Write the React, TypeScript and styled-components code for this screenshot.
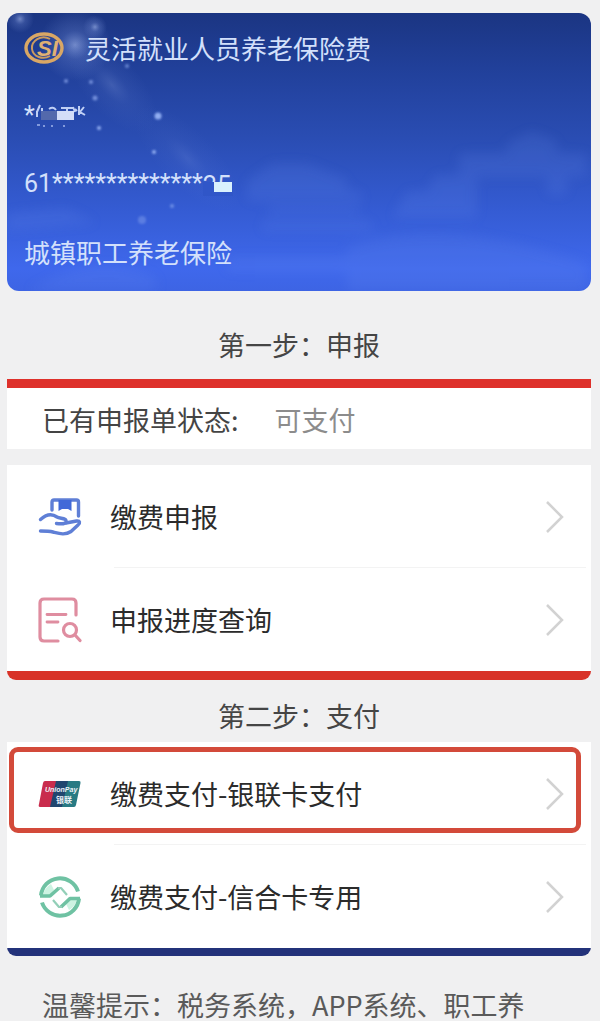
import React from "react";
import styled, { createGlobalStyle } from "styled-components";

const GlobalStyle = createGlobalStyle`
  * { box-sizing: border-box; }
  html, body { margin: 0; padding: 0; background: #f0f0f1; }
  body {
    font-family: "Noto Sans CJK SC", "Noto Sans", sans-serif;
    font-size: 27px;
    line-height: 40px;
    color: #333;
    overflow-x: hidden;
  }
`;

const Page = styled.main`
  padding: 13px 9px 0 7px;
`;

const Card = styled.section`
  position: relative;
  overflow: hidden;
  border-radius: 12px;
  padding: 15px 17px 19px;
  background: linear-gradient(180deg, #1b3582 0%, #21409a 20%, #2a4db3 45%, #345bd2 70%, #3f68ec 92%, #3d64e4 100%);
  color: #d3e0fb;
  font-size: 26px;
`;

const CardArt = styled.svg`
  position: absolute;
  inset: 0;
  width: 100%;
  height: 100%;
`;

const CardBody = styled.div`
  position: relative;
  display: flex;
  flex-direction: column;
  gap: 28px;
`;

const CardHead = styled.div`
  display: flex;
  align-items: center;
  gap: 15px;
  height: 40px;
`;

const CardTitle = styled.h1`
  margin: 0;
  font-size: 26px;
  font-weight: 400;
  line-height: 40px;
`;

const CardLine = styled.p`
  margin: 0;
  display: flex;
  align-items: center;
  height: 40px;
`;

const Latin = styled.span`
  font-family: Roboto, "Noto Sans CJK SC", sans-serif;
  font-size: 25px;
`;

const Masked = styled.span`
  position: relative;
`;

const MaskArt = styled.svg<{ $rise: number }>`
  position: absolute;
  left: 0;
  top: 50%;
  margin-top: -${(p) => p.$rise}px;
`;

const StepTitle = styled.h2<{ $tall?: boolean }>`
  margin: 0;
  display: flex;
  align-items: center;
  justify-content: center;
  height: ${(p) => (p.$tall ? 88 : 62)}px;
  padding-top: ${(p) => (p.$tall ? 20 : 10)}px;
  font-size: 27px;
  font-weight: 400;
  color: #454545;
`;

const Status = styled.div`
  display: flex;
  align-items: center;
  gap: 36px;
  height: 70px;
  margin-bottom: 16px;
  padding: 2px 35px 0;
  border-top: 9px solid #de312b;
  background: #fff;
  color: #444;
`;

const StatusValue = styled.span`
  color: #8c8c8c;
`;

const Menu = styled.nav<{ $edge: string; $thick: number }>`
  position: relative;
  background: ${(p) => p.$edge};
  padding-bottom: ${(p) => p.$thick}px;
  border-radius: 0 0 9px 9px;
`;

const Row = styled.button`
  display: flex;
  align-items: center;
  width: 100%;
  height: 103px;
  padding: 0 26px 0 31px;
  border: 0;
  background: #fff;
  color: #2b2b2b;
  font: inherit;
  text-align: left;
  cursor: pointer;
`;

const RowLabel = styled.span`
  flex: 1;
  margin-left: 28px;
`;

const Divider = styled.hr`
  height: 1px;
  margin: -1px 5px 0 107px;
  border: 0;
  background: #f3f3f3;
  position: relative;
`;

const Highlight = styled.span`
  position: absolute;
  top: 5px;
  left: 2px;
  right: 10px;
  height: 86px;
  border: 5px solid #d34a3a;
  border-radius: 9px;
  pointer-events: none;
`;

const Tip = styled.p`
  margin: 0;
  padding: 33px 35px 0;
  line-height: 32px;
  color: #5a5a5a;
`;

const Emblem = () => (
  <svg width="46" height="36" viewBox="0 0 46 36" aria-hidden="true">
    <ellipse cx="20" cy="18" rx="18" ry="14" fill="none" stroke="#d9a765" strokeWidth="3.4" />
    <path d="M26 9 C17 4 7 11 8 19 C9 27 19 30 26 26" fill="none" stroke="#c99a60" strokeWidth="2" />
    <text x="13" y="26" fontFamily="Liberation Sans, sans-serif" fontWeight="700" fontStyle="italic" fontSize="22" fill="#e0b173">SI</text>
  </svg>
);

const Backdrop = () => (
  <CardArt viewBox="0 0 584 278" preserveAspectRatio="none" aria-hidden="true">
    <defs>
      <radialGradient id="glow">
        <stop offset="0" stopColor="#a9bdf0" stopOpacity="0.6" />
        <stop offset="0.4" stopColor="#7f98dd" stopOpacity="0.25" />
        <stop offset="1" stopColor="#7f98dd" stopOpacity="0" />
      </radialGradient>
      <filter id="soft" x="-10%" y="-10%" width="120%" height="120%">
        <feGaussianBlur stdDeviation="6" />
      </filter>
      <filter id="dot" x="-100%" y="-100%" width="300%" height="300%">
        <feGaussianBlur stdDeviation="1" />
      </filter>
    </defs>
    <circle cx="68" cy="32" r="36" fill="url(#glow)" />
    <circle cx="88" cy="14" r="12" fill="url(#glow)" />
    <circle cx="13" cy="6" r="14" fill="url(#glow)" />
    <ellipse cx="105" cy="72" rx="60" ry="28" transform="rotate(48 105 72)" fill="url(#glow)" opacity="0.35" />
    <ellipse cx="180" cy="145" rx="70" ry="28" transform="rotate(45 180 145)" fill="url(#glow)" opacity="0.22" />
    <g fill="#91adf1" filter="url(#dot)">
      <circle cx="151" cy="103" r="3.5" />
      <circle cx="147" cy="139" r="2" />
      <circle cx="59" cy="68" r="2" opacity="0.7" />
      <circle cx="84" cy="69" r="2" opacity="0.7" />
      <circle cx="88" cy="85" r="2.5" opacity="0.7" />
      <circle cx="92" cy="115" r="2" />
      <circle cx="120" cy="53" r="2" opacity="0.6" />
      <circle cx="135" cy="207" r="4" opacity="0.4" />
      <circle cx="165" cy="193" r="2" opacity="0.6" />
    </g>
    <g fill="#6f93f0" opacity="0.15" filter="url(#soft)">
      <path d="M240 180 V168 L265 150 H300 L340 166 V178 H355 V188 H240Z" />
      <rect x="262" y="193" width="90" height="8" />
      <rect x="255" y="208" width="110" height="10" />
      <path d="M385 205 L400 178 H420 L428 162 H452 V140 H500 V130 L525 118 L550 128 V140 H580 V164 H560 V182 H540 V164 H470 V205Z" />
      <rect x="505" y="142" width="35" height="22" />
      <path d="M0 200 L60 195 L90 210 L0 218Z" />
      <path d="M340 235 Q430 200 580 250 V278 H340Z" />
      <path d="M20 278 Q90 235 150 265 V278Z" />
      <path d="M220 244 H350 V258 H220Z" />
    </g>
    <path d="M300 164 H346" stroke="#6f93f0" strokeOpacity="0.35" strokeWidth="3" filter="url(#dot)" />
  </CardArt>
);

const HandBoxIcon = () => (
  <svg width="44" height="40" viewBox="0 0 44 40" fill="none" stroke="#5f7fd6" strokeWidth="3.4" strokeLinecap="round" strokeLinejoin="round" aria-hidden="true">
    <path d="M14 13 V5 Q14 3 16 3 H38.500 Q40.500 3 40.500 5 V19" />
    <path d="M20.500 3 H33.500 V14 L30 12 H24 L20.500 14Z" fill="#4169d8" stroke="none" />
    <path d="M2.500 22.500 C8 17.500 14 16.500 19 20 C22 22 29 20.500 28 25 C27.500 27 22 27 18.500 26.500" />
    <path d="M28 26 L38.500 24 C42 23.500 42.500 26 40 28 L33 34.500 C27 38.500 21 36.500 15 35 C11 34 7 34 2.500 34" />
  </svg>
);

const FormSearchIcon = () => (
  <svg width="44" height="46" viewBox="0 0 44 46" fill="none" stroke="#df8da0" strokeWidth="3.2" strokeLinecap="round" aria-hidden="true">
    <path d="M20 44 H6 Q2 44 2 40 V6 Q2 2 6 2 H34 Q38 2 38 6 V18" />
    <path d="M9 17.500 H28 M9 25 H20" strokeWidth="2.800" />
    <circle cx="32" cy="33" r="6.500" />
    <path d="M37 38 L42 43.500" />
  </svg>
);

const UnionPayIcon = () => (
  <svg width="44" height="28" viewBox="0 0 44 28" aria-hidden="true">
    <path d="M7 1 H20 L14 27 H2 Q0 27 1 24 L5 3 Q5.500 1 7 1Z" fill="#c92c4d" />
    <path d="M18 1 H32 L26 27 H12Z" fill="#21466f" />
    <path d="M30 1 H41 Q43 1 42.500 3 L38 25 Q37.500 27 36 27 H24Z" fill="#287a83" />
    <text x="7" y="12" fontFamily="Liberation Sans, sans-serif" fontStyle="italic" fontWeight="700" fontSize="7" fill="#eef4fa">UnionPay</text>
    <text x="18" y="23" fontFamily="Noto Sans CJK SC, sans-serif" fontWeight="700" fontSize="8" fill="#eef4fa">银联</text>
  </svg>
);

const CreditUnionIcon = () => (
  <svg width="44" height="44" viewBox="0 0 44 44" fill="none" stroke="#6fc2a3" strokeLinejoin="round" aria-hidden="true">
    <path d="M5 21 Q6 13 13 9 L16 15 L11 21Z" fill="#cdf3e2" stroke="none" />
    <path d="M39 23 Q38 31 31 35 L28 29 L33 23Z" fill="#cdf3e2" stroke="none" />
    <path d="M3 20.500 A19 19 0 0 1 40 16.500" strokeWidth="4" />
    <path d="M41 23.500 A19 19 0 0 1 4 27.500" strokeWidth="4" />
    <path d="M2 21 H12 L21 13" strokeWidth="3.600" />
    <path d="M42 23.500 H32 L23 32" strokeWidth="3.600" />
    <path d="M20 13 L23 13 L29 20 M24 32 L21 32 L15 25" strokeWidth="2.200" stroke="#93cfb8" />
  </svg>
);

const Chevron = () => (
  <svg width="20" height="34" viewBox="0 0 20 34" fill="none" stroke="#d2d2d2" strokeWidth="2.500" aria-hidden="true">
    <path d="M2 2 L17 17 L2 32" />
  </svg>
);

const MenuRow = ({ icon, label }: { icon: React.ReactNode; label: string }) => (
  <Row type="button">
    {icon}
    <RowLabel>{label}</RowLabel>
    <Chevron />
  </Row>
);

export default function App() {
  return (
    <>
      <GlobalStyle />
      <Page>
        <Card>
          <Backdrop />
          <CardBody>
            <CardHead>
              <Emblem />
              <CardTitle>灵活就业人员养老保险费</CardTitle>
            </CardHead>
            <CardLine>
              <Latin>*</Latin>
              <Masked>
                <MaskArt $rise={13} width="54" height="26" viewBox="0 0 54 26" aria-hidden="true">
                  <path d="M5 2 L2 9 M2 8 V14 M7 5 V9 M14 6 Q18 3 21 7 M26 5 H38 M32 5 V9 M38 4 L40 9 M44 3 V12 M40 6 L42 8 M49 4 L45 9 L50 12" stroke="#bfcff5" strokeWidth="2" fill="none" />
                  <rect x="6" y="8" width="17" height="9" fill="#5369ac" />
                  <rect x="22" y="8" width="17" height="9" fill="#d3ddf8" />
                  <path d="M2 22 H5 M8 23 H10 M16 23 H18 M28 23 H30" stroke="#a9bdf0" strokeWidth="2" opacity="0.7" />
                </MaskArt>
              </Masked>
            </CardLine>
            <CardLine>
              <Latin>61**************</Latin>
              <Masked>
                <Latin>25</Latin>
                <MaskArt $rise={2} width="30" height="14" viewBox="0 0 30 14" aria-hidden="true">
                  <rect x="0" y="0" width="30" height="14" fill="#3056c8" />
                  <rect x="11" y="0" width="18" height="10" fill="#d9f1fd" />
                </MaskArt>
              </Masked>
            </CardLine>
            <CardLine>城镇职工养老保险</CardLine>
          </CardBody>
        </Card>

        <StepTitle $tall>第一步：申报</StepTitle>
        <Status>
          <span>已有申报单状态:</span>
          <StatusValue>可支付</StatusValue>
        </Status>
        <Menu $edge="#d83228" $thick={9}>
          <MenuRow icon={<HandBoxIcon />} label="缴费申报" />
          <Divider />
          <MenuRow icon={<FormSearchIcon />} label="申报进度查询" />
        </Menu>

        <StepTitle>第二步：支付</StepTitle>
        <Menu $edge="#23327a" $thick={8}>
          <MenuRow icon={<UnionPayIcon />} label="缴费支付-银联卡支付" />
          <Divider />
          <MenuRow icon={<CreditUnionIcon />} label="缴费支付-信合卡专用" />
          <Highlight />
        </Menu>
        <Tip>温馨提示：税务系统，APP系统、职工养</Tip>
      </Page>
    </>
  );
}
